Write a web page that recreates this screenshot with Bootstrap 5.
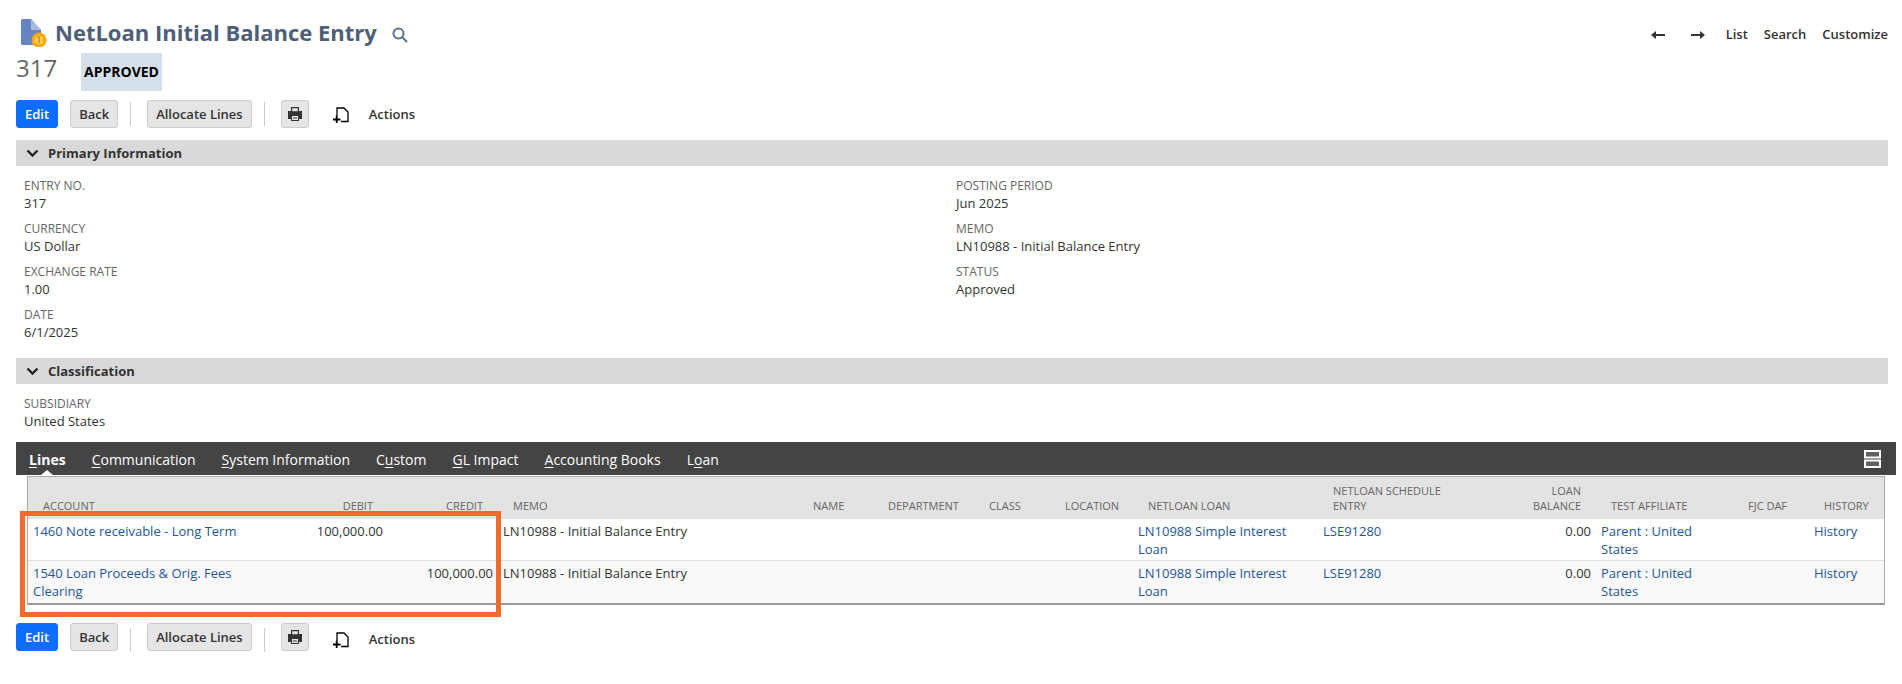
<!DOCTYPE html>
<html lang="en"><head><meta charset="utf-8"><title>NetLoan Initial Balance Entry</title>
<link href="https://cdn.jsdelivr.net/npm/bootstrap@5.3.0/dist/css/bootstrap.min.css" rel="stylesheet">
<style>
body{font-family:"Open Sans",sans-serif;font-size:13px;color:#333;background:#fff}
.pg{padding:15px 14px 0 16px;height:684px;overflow:hidden}
.ttl-row{height:34px}
.ttl{font-size:22px;font-weight:700;color:#4d5f79;line-height:34px;margin:0;white-space:nowrap}
.ttl-ico{margin:0 8px 0 5px;flex:none}
.srch{margin-left:15px;margin-top:5px;flex:none}
.topnav{color:#333;font-size:13px;font-weight:600;padding-top:6px}
.topnav a{color:#333;text-decoration:none}
.ar{width:14px;height:10px;flex:none}
.ar2{margin-left:26px;margin-right:21px}
.id-row{height:38px;margin-top:4px}
.recno{font-size:24px;color:#666;line-height:30px;width:65px}
.stat{background:#d5dfeb;color:#000;font-weight:700;font-size:14px;line-height:38px;height:38px;padding:0 3px}
.tb{height:28px}
.tb-top{margin-top:9px}
.tb-bot{margin-top:18px}
.tb-bot .vsep{margin-top:6px}
.nbtn{font-family:inherit;font-size:13px;font-weight:600;line-height:18px;height:28px;padding:4px 8px;border-radius:3px}
.bgrey{background:#e5e5e5;border:1px solid #ccc;color:#333}
.bblue{background:#0d6efd;border:1px solid #0d6efd;color:#fff}
.bprint{padding:0 5px}
.gap12{margin-left:12px}
.vsep{width:1px;height:24px;background:#ccc;margin:0 16px 0 12px;flex:none}
.act{margin-left:24px;color:#333;font-weight:600;padding-top:2px}
.act span{margin-left:20px}
.act-low{padding-top:7px}
.sec{height:26px;background:#d9d9d9;font-size:13px;font-weight:700;color:#333;padding-left:10px;padding-top:1px}
.sec svg{margin-right:9px}
.sec-a{margin-top:12px}
.sec-b{margin-top:9px}
.fields{padding:11px 8px 0}
.fcol{width:932px;flex:none}
.fld{height:43px}
.lab{font-size:12px;color:#666;line-height:17px;text-transform:uppercase}
.val{line-height:18px;color:#333}
.tabs{height:33px;background:#444;margin-top:4px;margin-right:-8px;padding-left:8px;padding-right:15px}
.tabs .tbx{color:#fff;font-size:14px;padding:2px 5px 0;text-decoration:none;position:relative;line-height:31px}
.tabs .tbx u{text-underline-offset:2px}
.tabs .on{font-weight:700}
.tabs .on::after{content:"";position:absolute;left:50%;bottom:0;margin-left:-6px;border:6px solid transparent;border-top:0;border-bottom-width:5px;border-bottom-color:#fff}
.tg{gap:16px;height:33px}
.gridwrap{margin:1px 3px 0 11px;border:1px solid #aaa;border-bottom:2px solid #999}
.lines{table-layout:fixed;width:100%;border-collapse:collapse;margin:0}
.lines th{background:#e3e3e3;color:#666;font-weight:400;font-size:11px;line-height:15px;padding:0 15px 6px;vertical-align:bottom;text-transform:uppercase;height:42px}
.lines td{padding:3px 5px 2px;line-height:18px;vertical-align:top;color:#333;height:41px;border:0}
.lines tr.r2 td{background:#f9f9f9;border-top:1px solid #ddd;height:42px;padding-top:3px}
.lines a{color:#255599;text-decoration:none}
.tr{text-align:right}
.highlight{position:absolute;left:20px;top:511px;width:481px;height:106px;border:5px solid #f26b2d;pointer-events:none}
.c1{width:260px}.c2{width:100px}.c3{width:110px}.c4{width:300px}.c5{width:75px}.c6{width:101px}.c7{width:76px}.c8{width:83px}.c9{width:185px}.c10{width:172px}.c11{width:106px}.c12{width:137px}.c13{width:76px}.c14{width:75px}
</style></head>
<body>
<div class="pg">
 <div class="d-flex align-items-center ttl-row">
  <svg class="ttl-ico" width="26" height="30" viewBox="0 0 26 30"><path d="M1.500 2H10l10 11v15H1.500A1.500 1.500 0 0 1 0 26.500v-23A1.500 1.500 0 0 1 1.500 2z" fill="#6585c2"/><path d="M10 2l10 11H10z" fill="#abbbdd"/><circle cx="18" cy="23" r="7.500" fill="#f9a90f"/><circle cx="18" cy="23" r="5.300" fill="#ffcb3d" stroke="#ec9c12" stroke-width=".8"/><path d="M16.500 20.800l1.800-1v6.500" stroke="#d98a10" stroke-width="1.200" fill="none"/></svg>
  <h1 class="ttl">NetLoan Initial Balance Entry</h1>
  <svg class="srch" width="16" height="16" viewBox="0 0 16 16" fill="none" stroke="#5a6f93" stroke-width="2"><circle cx="6.500" cy="6.500" r="5"/><path d="M10.500 10.500l4.500 4.500"/></svg>
  <div class="ms-auto d-flex align-items-center topnav">
   <svg class="ar" viewBox="0 0 14 10"><path d="M0 5l5-4v3h9v2H5v3z" fill="#333"/></svg>
   <svg class="ar ar2" viewBox="0 0 14 10"><path d="M14 5L9 1v3H0v2h9v3z" fill="#333"/></svg>
   <a href="#">List</a><a href="#" class="ms-3">Search</a><a href="#" class="ms-3">Customize</a>
  </div>
 </div>
 <div class="d-flex align-items-start id-row"><div class="recno">317</div><div class="stat">APPROVED</div></div>
 <div class="d-flex align-items-center tb tb-top">
  <button class="btn nbtn bblue">Edit</button><button class="btn nbtn bgrey gap12">Back</button><div class="vsep"></div><button class="btn nbtn bgrey">Allocate Lines</button><div class="vsep"></div>
  <button class="btn nbtn bgrey bprint d-flex align-items-center" aria-label="Print"><svg width="16" height="16" viewBox="0 0 16 16"><path d="M4 1h8v4h3v8h-3v2H4v-2H1V5h3z" fill="#333"/><path d="M5.200 2.200h5.600v3H5.200zM5 10h6v4H5z" fill="#e5e5e5"/><path d="M6 11.500h4v1H6z" fill="#333"/></svg></button>
  <div class="act d-flex align-items-center"><svg width="16" height="16" viewBox="0 0 16 16" fill="none" stroke="#000" stroke-width="1.300"><path d="M4 9V1h7l4 4v9.500H8"/><path d="M0 12.500h7.500M3.700 8.700v7.300" stroke-width="1.800"/></svg><span>Actions</span></div>
 </div>
 <div class="sec sec-a d-flex align-items-center"><svg width="13" height="9" viewBox="0 0 13 9" fill="none" stroke="#222" stroke-width="2.400"><path d="M1.500 1.500l5 5 5-5"/></svg>Primary Information</div>
 <div class="fields d-flex">
  <div class="fcol">
   <div class="fld"><div class="lab">Entry No.</div><div class="val">317</div></div>
   <div class="fld"><div class="lab">Currency</div><div class="val">US Dollar</div></div>
   <div class="fld"><div class="lab">Exchange Rate</div><div class="val">1.00</div></div>
   <div class="fld"><div class="lab">Date</div><div class="val">6/1/2025</div></div>
  </div>
  <div class="fcol">
   <div class="fld"><div class="lab">Posting Period</div><div class="val">Jun 2025</div></div>
   <div class="fld"><div class="lab">Memo</div><div class="val">LN10988 - Initial Balance Entry</div></div>
   <div class="fld"><div class="lab">Status</div><div class="val">Approved</div></div>
  </div>
 </div>
 <div class="sec sec-b d-flex align-items-center"><svg width="13" height="9" viewBox="0 0 13 9" fill="none" stroke="#222" stroke-width="2.400"><path d="M1.500 1.500l5 5 5-5"/></svg>Classification</div>
 <div class="fields"><div class="fld"><div class="lab">Subsidiary</div><div class="val">United States</div></div></div>
 <div class="tabs d-flex align-items-center">
  <div class="d-flex tg">
   <a href="#" class="tbx on"><u>L</u>ines</a><a href="#" class="tbx"><u>C</u>ommunication</a><a href="#" class="tbx"><u>S</u>ystem Information</a><a href="#" class="tbx">C<u>u</u>stom</a><a href="#" class="tbx"><u>G</u>L Impact</a><a href="#" class="tbx"><u>A</u>ccounting Books</a><a href="#" class="tbx">L<u>o</u>an</a>
  </div>
  <svg class="ms-auto" width="17" height="18" viewBox="0 0 17 18" fill="#5f5f5f" stroke="#fff" stroke-width="2"><rect x="1" y="1" width="15" height="6.500"/><rect x="1" y="10.500" width="15" height="6.500"/></svg>
 </div>
 <div class="gridwrap">
  <table class="lines">
   <colgroup><col class="c1"><col class="c2"><col class="c3"><col class="c4"><col class="c5"><col class="c6"><col class="c7"><col class="c8"><col class="c9"><col class="c10"><col class="c11"><col class="c12"><col class="c13"><col class="c14"></colgroup>
   <thead><tr><th>Account</th><th class="tr">Debit</th><th class="tr">Credit</th><th>Memo</th><th>Name</th><th>Department</th><th>Class</th><th>Location</th><th>NetLoan Loan</th><th>NetLoan Schedule Entry</th><th class="tr">Loan Balance</th><th>Test Affiliate</th><th>FJC DAF</th><th>History</th></tr></thead>
   <tbody>
    <tr><td><a href="#">1460 Note receivable - Long Term</a></td><td class="tr">100,000.00</td><td></td><td>LN10988 - Initial Balance Entry</td><td></td><td></td><td></td><td></td><td><a href="#">LN10988 Simple Interest Loan</a></td><td><a href="#">LSE91280</a></td><td class="tr">0.00</td><td><a href="#">Parent : United States</a></td><td></td><td><a href="#">History</a></td></tr>
    <tr class="r2"><td><a href="#">1540 Loan Proceeds &amp; Orig. Fees Clearing</a></td><td></td><td class="tr">100,000.00</td><td>LN10988 - Initial Balance Entry</td><td></td><td></td><td></td><td></td><td><a href="#">LN10988 Simple Interest Loan</a></td><td><a href="#">LSE91280</a></td><td class="tr">0.00</td><td><a href="#">Parent : United States</a></td><td></td><td><a href="#">History</a></td></tr>
   </tbody>
  </table>
 </div>
 <div class="d-flex align-items-center tb tb-bot">
  <button class="btn nbtn bblue">Edit</button><button class="btn nbtn bgrey gap12">Back</button><div class="vsep"></div><button class="btn nbtn bgrey">Allocate Lines</button><div class="vsep"></div>
  <button class="btn nbtn bgrey bprint d-flex align-items-center" aria-label="Print"><svg width="16" height="16" viewBox="0 0 16 16"><path d="M4 1h8v4h3v8h-3v2H4v-2H1V5h3z" fill="#333"/><path d="M5.200 2.200h5.600v3H5.200zM5 10h6v4H5z" fill="#e5e5e5"/><path d="M6 11.500h4v1H6z" fill="#333"/></svg></button>
  <div class="act act-low d-flex align-items-center"><svg width="16" height="16" viewBox="0 0 16 16" fill="none" stroke="#000" stroke-width="1.300"><path d="M4 9V1h7l4 4v9.500H8"/><path d="M0 12.500h7.500M3.700 8.700v7.300" stroke-width="1.800"/></svg><span>Actions</span></div>
 </div>
</div>
<div class="highlight"></div>
</body></html>
